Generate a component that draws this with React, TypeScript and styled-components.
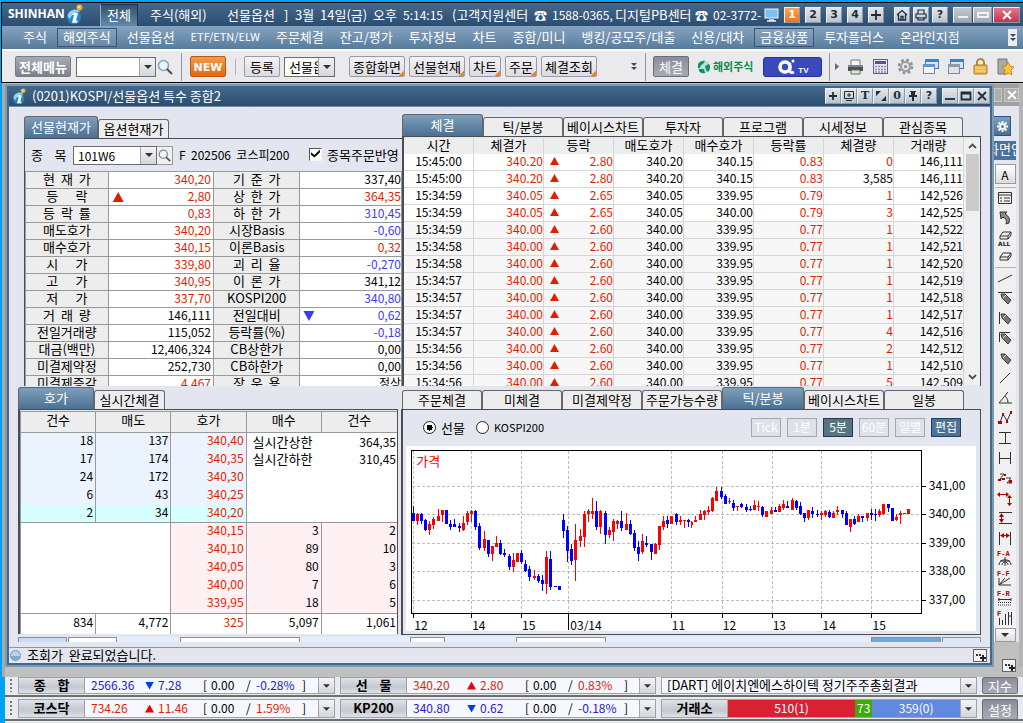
import React from 'react';
import styled, { createGlobalStyle, css } from 'styled-components';

const RED = '#e01e00';
const BLUE = '#3a3aff';
const INK = '#000';

const GlobalStyle = createGlobalStyle`
  *, *::before, *::after { box-sizing: border-box; }
  body {
    margin: 0;
    background: #00a2f5;
    color: ${INK};
    font: 13px/15px "Noto Sans CJK KR", "DejaVu Sans", sans-serif;
  }
  button, input, select {
    font: inherit;
    color: inherit;
    margin: 0;
    padding: 0;
    border: 0;
    border-radius: 0;
    background: none;
  }
  svg { display: block; flex: none; }
`;

/* ---------- page shell ---------- */

const Page = styled.div`
  min-height: 100vh;
  display: flex;
  flex-direction: column;
  padding-top: 2px;
  overflow: hidden;
  white-space: pre;
`;

const Header = styled.header`
  margin-left: 1px;
  border: 1px solid #000;
  border-right: 0;
`;

const TitleBar = styled.div`
  display: flex;
  align-items: center;
  height: 23px;
  padding: 0 3px 0 6px;
  color: #fff;
  background: linear-gradient(#46698b, #2b4e70);
`;

const Brand = styled.h1`
  display: flex;
  align-items: center;
  gap: 2px;
  width: 92px;
  margin: 0;
  font: 700 12px/20px "Open Sans", "Noto Sans", sans-serif;
`;

const AllTab = styled.button`
  align-self: flex-end;
  width: 38px;
  height: 22px;
  padding-bottom: 2px;
  color: #fff;
  border: 1px solid #1d344c;
  border-bottom: 0;
  border-left-color: #8fb0cd;
  background: linear-gradient(#31536f, #6488aa);
`;

const TitleText = styled.div`
  flex: 1;
  display: flex;
  min-width: 0;
  margin-left: 12px;
  line-height: 20px;
  overflow: hidden;
`;

const TitlePart = styled.span<{ $w: number; $small?: boolean }>`
  flex: none;
  width: ${p => p.$w}px;
  font-size: ${p => (p.$small ? 12 : 13)}px;
`;

const TitleTools = styled.div`
  display: flex;
  align-items: center;
  gap: 5px;
`;

const ToolSet = styled.div<{ $gap?: number; $left?: number }>`
  display: flex;
  align-items: center;
  gap: ${p => p.$gap ?? 5}px;
  margin-left: ${p => p.$left ?? 0}px;
`;

const SquareButton = styled.button<{ $tone?: 'hot' | 'close' | 'wide'; $serif?: boolean }>`
  display: flex;
  align-items: center;
  justify-content: center;
  width: 16px;
  height: 16px;
  color: #222c38;
  font: 700 11px/14px "DejaVu Sans", sans-serif;
  ${p => p.$serif && 'font-family: "DejaVu Serif", serif;'}
  border: 1px solid #eef1f5;
  border-right-color: #8b97a6;
  border-bottom-color: #8b97a6;
  background: linear-gradient(#e2e7ed, #b9c3cf);
  ${p => p.$tone === 'hot' && css`
    color: #fff;
    background: linear-gradient(#f9a558, #ee7413);
  `}
  ${p => p.$tone === 'wide' && css`
    width: 19px;
    color: #f4f4f4;
    background: linear-gradient(#c3c9cf, #9fa8b1);
  `}
  ${p => p.$tone === 'close' && css`
    width: 27px;
    color: #fff;
    background: linear-gradient(#df7a8c, #c33350);
  `}
`;

const MenuBar = styled.nav`
  display: flex;
  align-items: center;
  gap: 4px;
  height: 23px;
  padding: 0 6px 0 15px;
  background: linear-gradient(#86a4c1, #587b9b);
`;

const MenuLink = styled.a<{ $boxed?: boolean; $latin?: boolean }>`
  height: 19px;
  padding: 0 5px;
  color: #fff;
  font-size: ${p => (p.$latin ? 11 : 13)}px;
  text-decoration: none;
  border: 1px solid ${p => (p.$boxed ? '#35557a' : 'transparent')};
  background: ${p => (p.$boxed ? 'rgba(255,255,255,0.06)' : 'none')};
`;

const MenuMore = styled.button`
  display: flex;
  align-items: center;
  justify-content: center;
  width: 9px;
  height: 17px;
  margin-left: auto;
  background: #e9edf2;
`;

const Toolbar = styled.div`
  display: flex;
  align-items: center;
  height: 33px;
  padding: 0 6px 0 13px;
  border-top: 2px solid #fafafa;
  background: #eaeaec;
`;

const ToolButton = styled.button<{ $w: number; $tone?: 'dark' | 'orange' | 'menu'; $left?: number; $corner?: boolean; $short?: boolean }>`
  width: ${p => p.$w}px;
  height: ${p => (p.$short ? 17 : 21)}px;
  margin-left: ${p => p.$left ?? 0}px;
  padding-bottom: 1px;
  line-height: ${p => (p.$short ? 13 : 17)}px;
  border: 1px solid #9a9aa6;
  border-radius: 2px;
  background: linear-gradient(#f3f3f5, #dcdce1);
  ${p => p.$corner && css`
    background: linear-gradient(135deg, transparent 0 calc(100% - 4px), #e88a1c calc(100% - 4px)) right bottom / 6px 6px no-repeat,
      linear-gradient(#f3f3f5, #dcdce1);
  `}
  ${p => p.$tone === 'dark' && css`
    color: #fff;
    border-color: #6e6e7a;
    background: linear-gradient(#8a8d99, #a9abb4);
  `}
  ${p => p.$tone === 'menu' && css`
    color: #fff;
    font-weight: 700;
    border-color: #7a7c88;
    background: linear-gradient(#a9abb4, #7e818d);
  `}
  ${p => p.$tone === 'orange' && css`
    padding: 1px 0 0;
    color: #fff;
    font: 700 11px/17px "DejaVu Sans", sans-serif;
    border-color: #b85a10;
    background: linear-gradient(#f39a4c, #e9660c);
  `}
`;

const Divider = styled.span<{ $left: number; $right: number; $short?: boolean }>`
  width: 1px;
  height: ${p => (p.$short ? 16 : 28)}px;
  margin: 0 ${p => p.$right}px 0 ${p => p.$left}px;
  background: ${p => (p.$short ? '#b4b4ba' : '#8b97a3')};
`;

const Combo = styled.div<{ $w: number; $left?: number; $h?: number }>`
  display: flex;
  width: ${p => p.$w}px;
  height: ${p => p.$h ?? 20}px;
  margin-left: ${p => p.$left ?? 0}px;
  border: 1px solid #6b6b70;
  background: #fff;

  input, select {
    flex: 1;
    min-width: 0;
    padding-left: 4px;
    appearance: none;
    outline: 0;
    overflow: hidden;
  }
  input { font-size: 12px; }
`;

const DropButton = styled.button<{ $w?: number }>`
  display: flex;
  flex: none;
  align-items: center;
  justify-content: center;
  width: ${p => p.$w ?? 16}px;
  border-left: 1px solid #a5a5aa;
  background: linear-gradient(#f4f4f6, #d3d6db);
`;

const SymbolSearch = styled.button`
  display: flex;
  align-items: center;
  justify-content: center;
  width: 16px;
  height: 19px;
  border: 1px solid #9a9a9a;
  border-left: 0;
  background: #f0f0f0;
`;

const IconButton = styled.button`
  display: flex;
  align-items: center;
  justify-content: center;
  width: 18px;
  height: 20px;
`;

const OverseasLink = styled.a`
  display: flex;
  align-items: center;
  gap: 2px;
  margin-left: 8px;
  color: #0f8a4c;
  font: 700 11px/15px "Noto Sans CJK KR", sans-serif;
  text-decoration: none;
`;

const TvButton = styled.button`
  display: flex;
  align-items: center;
  justify-content: center;
  gap: 1px;
  width: 59px;
  height: 20px;
  margin-left: 10px;
  color: #fff;
  font: 700 8px/8px "Liberation Sans", sans-serif;
  border: 1px solid #26309a;
  border-radius: 3px;
  background: #3a49bb;

  span { padding-top: 8px; }
`;

/* ---------- workspace ---------- */

const Workspace = styled.div`
  display: flex;
  flex: 1;
  align-items: stretch;
  margin-left: 2px;
  padding: 1px 0 10px;
  border-left: 3px solid #a9a9ad;
  background: #bfbfbf;
`;

const Window = styled.main`
  display: flex;
  flex-direction: column;
  flex: 1;
  min-width: 0;
  border: 2px solid #7e9ab2;
`;

const WindowInner = styled.div`
  display: flex;
  flex-direction: column;
  flex: 1;
  border: 2px solid #43698a;
  border-top: 0;
  background: #e3e6ee;
`;

const WindowTitle = styled.div`
  display: flex;
  align-items: center;
  height: 21px;
  padding: 0 0 0 4px;
  color: #fff;
  border-bottom: 1px solid #6d8dab;
  background: linear-gradient(#46698b, #2b4e70);

  h2 {
    flex: 1;
    margin: 0 0 0 6px;
    padding-bottom: 2px;
    font: inherit;
  }
`;

const TopRow = styled.div`
  display: flex;
  height: 279px;
  overflow: hidden;
`;

const QuotePane = styled.section`
  flex: none;
  width: 393px;
  padding: 9px 0 0 15px;
`;

const TradesPane = styled.section`
  flex: 1;
  min-width: 0;
  padding: 7px 9px 0 0;
`;

const Tabs = styled.div<{ $inset?: boolean }>`
  display: flex;
  align-items: flex-end;
  height: 22px;
  padding-left: ${p => (p.$inset ? 1 : 0)}px;
`;

const Tab = styled.button<{ $w: number; $on?: boolean }>`
  width: ${p => p.$w}px;
  height: ${p => (p.$on ? 22 : 19)}px;
  padding-bottom: 2px;
  line-height: 15px;
  white-space: nowrap;
  border: 1px solid #66666e;
  border-bottom: 0;
  border-radius: 3px 3px 0 0;
  color: ${p => (p.$on ? '#fff' : INK)};
  background: ${p => (p.$on ? 'linear-gradient(#7f9fba, #4a7092)' : '#ededee')};

  & + & { border-left-width: ${p => (p.$on ? 1 : 0)}px; }
`;

const Frame = styled.div`
  border: 1px solid #4c4c54;
  border-left-width: 2px;
`;

const FrameLeft = styled(Frame)`
  border-width: 1px 0 0 1px;
`;

const SymbolRow = styled.form`
  display: flex;
  align-items: center;
  height: 32px;
  padding-left: 6px;
`;

const SymbolLabel = styled.label`
  width: 42px;
  padding-bottom: 2px;
`;

const SymbolName = styled.span`
  width: 130px;
  margin-left: 6px;
  padding-bottom: 2px;
  font-size: 12px;
`;

const CheckLabel = styled.label`
  display: flex;
  align-items: center;
  gap: 5px;
  padding-bottom: 2px;
`;

const CheckBox = styled.input`
  display: flex;
  appearance: none;
  width: 13px;
  height: 13px;
  border: 1px solid #f4f4f4;
  border-top-color: #555;
  border-left-color: #555;
  background: #fff;

  &:checked::after {
    content: "";
    width: 9px;
    height: 8px;
    margin: 1px;
    background: #000;
    clip-path: polygon(0 35%, 38% 70%, 100% 0, 100% 35%, 38% 100%, 0 65%);
  }
`;

const QuoteTable = styled.table`
  width: 100%;
  table-layout: fixed;
  border-spacing: 0;
  border-top: 1px solid #999;
  border-left: 1px solid #999;
  line-height: 13px;

  th, td {
    height: 17px;
    padding: 0;
    vertical-align: top;
    border-right: 1px solid #999;
    border-bottom: 1px solid #999;
  }
  th { font-weight: 400; background: #ededed; }
  td { background: #fff; }
`;

const tones = { r: RED, b: BLUE, k: INK };
type Tone = keyof typeof tones;

const Num = styled.td<{ $tone?: Tone; $edge?: number }>`
  color: ${p => tones[p.$tone ?? 'k']};
  font-size: 12px;
  text-align: right;

  && { padding-right: ${p => p.$edge ?? 2}px; }
`;

const MarkedCell = styled.div<{ $left: number }>`
  display: flex;
  align-items: flex-start;
  justify-content: space-between;
  padding-left: ${p => p.$left}px;

  i { margin-top: 3px; }
`;

const Triangle = styled.i<{ $down?: boolean; $size?: number; $color?: string }>`
  display: inline-block;
  flex: none;
  width: ${p => p.$size ?? 9}px;
  height: ${p => (p.$size ?? 9) - 1}px;
  background: ${p => p.$color ?? (p.$down ? BLUE : RED)};
  clip-path: ${p => (p.$down ? 'polygon(0 0, 100% 0, 50% 100%)' : 'polygon(50% 0, 100% 100%, 0 100%)')};
`;

const TradesFrame = styled(Frame)`
  display: flex;
  padding-top: 1px;
`;

const TradeArea = styled.div`
  flex: 1;
  min-width: 0;
`;

const TradeTable = styled.table`
  width: 100%;
  table-layout: fixed;
  border-spacing: 0;
  line-height: 13px;

  th, td {
    height: 17px;
    padding: 0;
    vertical-align: top;
    border-right: 1px solid #d6d6d6;
    border-bottom: 1px solid #d6d6d6;
  }
  th {
    height: 16px;
    font-weight: 400;
    border-bottom: 0;
    background: #ededed;
  }
  tbody tr { background: #f7f7f7; }
  tbody tr:nth-child(-n + 4) { background: #fff; }
  td:first-child { font-size: 12px; text-align: center; }
`;

const ScrollBar = styled.div`
  display: flex;
  flex-direction: column;
  align-items: center;
  width: 16px;
  height: 247px;
  padding: 4px 1px;
  background: #f0f0f0;
`;

const ScrollThumb = styled.div`
  width: 13px;
  height: 57px;
  margin: 4px 0 auto;
  background: #cbcbcb;
`;

const BottomRow = styled.div`
  display: flex;
  align-items: flex-start;
  padding-top: 1px;
`;

const BookPane = styled.section`
  flex: none;
  width: 392px;
  padding: 0 3px 0 9px;
`;

const ChartPane = styled.section`
  flex: 1;
  min-width: 0;
  padding-right: 9px;
`;

const BookFrame = styled(Frame)`
  padding-top: 1px;
  border-bottom: 0;
`;

const BookTable = styled.table`
  width: 100%;
  table-layout: fixed;
  border-spacing: 0;
  border-top: 1px solid #999;
  border-left: 1px solid #999;
  background: #fff;
  line-height: 13px;

  th, td {
    height: 18px;
    padding: 0;
    vertical-align: top;
    border-right: 1px solid #999;
  }
  th {
    height: 21px;
    padding-top: 1px;
    font-weight: 400;
    border-bottom: 1px solid #999;
    background: #ededed;
  }
  tfoot td { height: 21px; padding-top: 1px; border-top: 1px solid #999; }
  tr > :last-child { border-right: 0; }
`;

const AskRow = styled.tr<{ $best?: boolean }>`
  background: ${p => (p.$best ? '#d8ffff' : '#ebf3ff')};
  td { border-bottom: ${p => (p.$best ? '1px solid #999' : '0')}; }
  && > td:nth-child(3) { border-right: 1px solid #999; }
`;

const BidRow = styled.tr`
  background: #fff0f3;
`;

const LimitCell = styled.td`
  vertical-align: top;
  background: #fff;

  && { border-bottom: 1px solid #999; border-right: 0; }

  dl {
    display: grid;
    grid-template-columns: auto auto;
    justify-content: space-between;
    row-gap: 4px;
    margin: 2px 1px 0 6px;
  }
  dd { margin: 0; font-size: 12px; text-align: right; }
`;

const BlankCell = styled.td`
  background: #fff;
`;

const ChartBox = styled(Frame)`
  display: flex;
  flex-direction: column;
  padding: 0 4px 3px 3px;
`;

const ChartBar = styled.div`
  display: flex;
  align-items: center;
  gap: 11px;
  height: 36px;
  padding: 0 15px 2px 17px;
`;

const RadioLabel = styled.label<{ $latin?: boolean }>`
  display: flex;
  align-items: center;
  gap: 5px;
  font-size: ${p => (p.$latin ? 11 : 13)}px;
`;

const Radio = styled.input`
  appearance: none;
  width: 13px;
  height: 13px;
  border: 1px solid #222;
  border-radius: 50%;
  background: #fff;

  &:checked { background: radial-gradient(circle, #000 0 3px, #fff 3px); }
`;

const PeriodSet = styled.div`
  display: flex;
  gap: 6px;
  margin-left: auto;
`;

const PeriodButton = styled.button<{ $state: 'off' | 'on' | 'edit' }>`
  width: 30px;
  height: 19px;
  padding-bottom: 2px;
  font-size: 12px;
  line-height: 15px;
  color: #fff;
  border: 1px solid ${p => ({ off: '#a6a6ae', on: '#26384a', edit: '#1f4166' }[p.$state])};
  background: ${p => ({ off: '#dfe1e8', on: '#577482', edit: '#4b7398' }[p.$state])};
`;

const ChartSvg = styled.svg`
  width: 100%;
  height: 185px;
  background: #fff;
`;

const PeekStrip = styled.div`
  display: flex;
  height: 5px;
  margin: 2px 9px 5px 9px;
  overflow: hidden;
  background: #e5eeff;
`;

const Peek = styled.span<{ $w: number; $left: number; $fill?: string; $push?: boolean }>`
  width: ${p => p.$w}px;
  height: 6px;
  margin-left: ${p => (p.$push ? 'auto' : `${p.$left}px`)};
  border: 1px solid #8a8f9a;
  background: ${p => p.$fill ?? '#fff'};
`;

const StatusBar = styled.footer`
  display: flex;
  align-items: center;
  gap: 6px;
  flex: 1;
  min-height: 16px;
  padding: 0 3px 0 1px;
  border-top: 1px solid #7e9ab2;
`;

const StatusDot = styled.i`
  width: 11px;
  height: 11px;
  border: 1px solid #6f96bd;
  border-radius: 50%;
  background: linear-gradient(#b9d3ec 50%, #7fabd4 50%);
`;

const StatusText = styled.p`
  margin: 0;
  padding-bottom: 2px;
  line-height: 13px;
`;

const StatusButton = styled.button`
  display: flex;
  align-items: center;
  justify-content: center;
  width: 14px;
  height: 13px;
  margin-left: auto;
  border: 1px solid #666;
  background: #f2f2f2;
`;

/* ---------- drawing tools at the right ---------- */

const Side = styled.aside`
  display: flex;
  flex-direction: column;
  width: 29px;
  flex: none;
  border-right: 4px solid #b4b4b4;
  background: #e3e6ee;
`;

const SideTitle = styled.div`
  display: flex;
  align-items: center;
  gap: 2px;
  height: 22px;
  overflow: hidden;
  background: #a0a0a0;
`;

const SideTitleButton = styled.button<{ $w: number }>`
  display: flex;
  align-items: center;
  justify-content: center;
  width: ${p => p.$w}px;
  height: 14px;
  color: #fff;
  border: 1px solid #c8c8c8;
  background: #aeaeae;
`;

const SideSettings = styled.button`
  display: flex;
  align-items: center;
  justify-content: center;
  width: 17px;
  height: 20px;
  margin: 10px 0 5px;
  border: 1px solid #2f577d;
  border-left: 0;
  background: linear-gradient(#7b9fbf, #476f95);
`;

const SideName = styled.div`
  display: flex;
  justify-content: center;
  width: 22px;
  height: 19px;
  line-height: 15px;
  color: #fff;
  overflow: hidden;
  background: #4a7196;
`;

const SideTools = styled.div`
  display: flex;
  flex-direction: column;
  align-items: center;
  width: 22px;
  margin-top: 4px;
  background: #f0f0f0;
`;

const SideTool = styled.button<{ $pressed?: boolean; $rule?: boolean; $h?: number }>`
  display: flex;
  align-items: center;
  justify-content: center;
  width: 21px;
  height: ${p => p.$h ?? 20}px;
  font-size: 12px;
  line-height: 15px;
  border-bottom: ${p => (p.$rule ? '1px solid #b5b5b5' : '0')};
  ${p => p.$pressed && css`
    border: 1px solid #9a9a9a;
    background: linear-gradient(#fff, #dcdcdc);
  `}
`;

const SideFoot = styled.div`
  display: flex;
  flex: 1;
  align-items: flex-end;
  padding: 5px 3px 5px;
  margin-bottom: -10px;
  background: #bfbfbf;
`;

/* ---------- index tickers ---------- */

const Tickers = styled.footer`
  margin-left: 5px;
  padding-bottom: 2px;
  background: #e9eaee;
`;

const TickerRow = styled.div<{ $short?: boolean }>`
  display: flex;
  gap: 5px;
  height: ${p => (p.$short ? 20 : 24)}px;
  padding: ${p => (p.$short ? '0 5px 1px 4px' : '2px 5px 1px 4px')};
  border-bottom: 2px solid #6f7069;
  line-height: 13px;
`;

const Grip = styled.i`
  width: 4px;
  margin: 2px 0;
  background: repeating-linear-gradient(#77787c 0 2px, transparent 2px 4px) 1px 0 / 2px 100% no-repeat;
`;

const TickerBox = styled.section<{ $w?: number }>`
  display: flex;
  ${p => (p.$w ? `flex: none; width: ${p.$w}px;` : 'flex: 1; min-width: 0;')}
  border: 1px solid #9aa3ad;
  background: #f7f8ff;
`;

const TickerName = styled.h3`
  display: flex;
  align-items: center;
  justify-content: center;
  flex: none;
  width: 66px;
  margin: 0;
  padding-bottom: 2px;
  font: inherit;
  font-weight: 700;
  border-right: 1px solid #9aa3ad;
  background: linear-gradient(#dfe2e7, #c3c8cf 60%, #dfe2e7);
`;

const TickerValues = styled.div<{ $color: string }>`
  display: grid;
  grid-template-columns: 54px 13px 45px 8px 35px 10px 46px 1fr;
  align-items: center;
  flex: 1;
  padding: 0 0 2px 6px;
  color: ${p => p.$color};
  font-size: 12px;

  span { color: ${INK}; }
  i { margin-top: 2px; }
`;

const News = styled.a`
  flex: 1;
  min-width: 0;
  padding-left: 5px;
  color: ${INK};
  text-decoration: none;
`;

const Ratio = styled.div<{ $color: string; $grow: number }>`
  display: flex;
  align-items: center;
  justify-content: center;
  flex: ${p => p.$grow} 1 0;
  min-width: 0;
  padding-bottom: 2px;
  color: #fff;
  font-size: 12px;
  background: ${p => p.$color};
`;

/* ---------- data ---------- */

const menu = ['주식', '해외주식', '선물옵션', 'ETF/ETN/ELW', '주문체결', '잔고/평가', '투자정보', '차트', '종합/미니', '뱅킹/공모주/대출', '신용/대차', '금융상품', '투자플러스', '온라인지점'];

const titleParts: [string, number, boolean?][] = [
  ['주식(해외)', 77], ['선물옵션', 57], [']', 11], ['3월', 25], ['14일(금)', 53], ['오후', 30], ['5:14:15', 49, true],
  ['(고객지원센터', 82], ['☎', 18], ['1588-0365,', 63, true], ['디지털PB센터', 80], ['☎', 18], ['02-3772-', 48, true],
];

type Q = [string, string, Tone, string, string, Tone, ('up' | 'down')?];
const quotes: Q[] = [
  ['현\u00a0\u00a0재\u00a0\u00a0가', '340,20', 'r', '기\u00a0\u00a0준\u00a0\u00a0가', '337,40', 'k'],
  ['등\u00a0\u00a0\u00a0\u00a0\u00a0\u00a0락', '2,80', 'r', '상\u00a0\u00a0한\u00a0\u00a0가', '364,35', 'r', 'up'],
  ['등\u00a0\u00a0락\u00a0\u00a0률', '0,83', 'r', '하\u00a0\u00a0한\u00a0\u00a0가', '310,45', 'b'],
  ['매도호가', '340,20', 'r', '시장Basis', '-0,60', 'b'],
  ['매수호가', '340,15', 'r', '이론Basis', '0,32', 'r'],
  ['시\u00a0\u00a0\u00a0\u00a0\u00a0\u00a0가', '339,80', 'r', '괴\u00a0\u00a0리\u00a0\u00a0율', '-0,270', 'b'],
  ['고\u00a0\u00a0\u00a0\u00a0\u00a0\u00a0가', '340,95', 'r', '이\u00a0\u00a0론\u00a0\u00a0가', '341,12', 'k'],
  ['저\u00a0\u00a0\u00a0\u00a0\u00a0\u00a0가', '337,70', 'r', 'KOSPI200', '340,80', 'b'],
  ['거\u00a0\u00a0래\u00a0\u00a0량', '146,111', 'k', '전일대비', '0,62', 'b', 'down'],
  ['전일거래량', '115,052', 'k', '등락률(%)', '-0,18', 'b'],
  ['대금(백만)', '12,406,324', 'k', 'CB상한가', '0,00', 'k'],
  ['미결제약정', '252,730', 'k', 'CB하한가', '0,00', 'k'],
  ['미결제증감', '4,467', 'r', '장\u00a0\u00a0운\u00a0\u00a0용', '정상', 'k'],
];

const tradeHead = ['시간', '체결가', '등락', '매도호가', '매수호가', '등락률', '체결량', '거래량'];
const trades = [
  ['15:45:00', '340.20', '2.80', '340.20', '340.15', '0.83', '0', '146,111'],
  ['15:45:00', '340.20', '2.80', '340.20', '340.15', '0.83', '3,585', '146,111'],
  ['15:34:59', '340.05', '2.65', '340.05', '339.95', '0.79', '1', '142,526'],
  ['15:34:59', '340.05', '2.65', '340.05', '340.00', '0.79', '3', '142,525'],
  ['15:34:59', '340.00', '2.60', '340.00', '339.95', '0.77', '1', '142,522'],
  ['15:34:58', '340.00', '2.60', '340.00', '339.95', '0.77', '1', '142,521'],
  ['15:34:58', '340.00', '2.60', '340.00', '339.95', '0.77', '1', '142,520'],
  ['15:34:57', '340.00', '2.60', '340.00', '339.95', '0.77', '1', '142,519'],
  ['15:34:57', '340.00', '2.60', '340.00', '339.95', '0.77', '1', '142,518'],
  ['15:34:57', '340.00', '2.60', '340.00', '339.95', '0.77', '1', '142,517'],
  ['15:34:57', '340.00', '2.60', '340.00', '339.95', '0.77', '4', '142,516'],
  ['15:34:56', '340.00', '2.60', '340.00', '339.95', '0.77', '2', '142,512'],
  ['15:34:56', '340.00', '2.60', '340.00', '339.95', '0.77', '1', '142,510'],
  ['15:34:56', '340.00', '2.60', '340.00', '339.95', '0.77', '5', '142,509'],
];

const asks = [['18', '137', '340,40'], ['17', '174', '340,35'], ['24', '172', '340,30'], ['6', '43', '340,25'], ['2', '34', '340,20']];
const bids = [['340,15', '3', '2'], ['340,10', '89', '10'], ['340,05', '80', '3'], ['340,00', '7', '6'], ['339,95', '18', '5']];

/* x, high, body top, body bottom, low, rising (1) or falling (0); three units to a pixel */
const candles = [
  [37, 363, 383, 408, 408, 0], [49, 383, 387, 408, 420, 1], [61, 384, 387, 408, 417, 0], [73, 402, 405, 435, 438, 0],
  [85, 408, 417, 435, 450, 1], [97, 396, 402, 420, 432, 1], [112, 372, 393, 408, 408, 1], [124, 375, 375, 390, 411, 1],
  [136, 375, 375, 417, 417, 0], [148, 405, 417, 426, 435, 0], [160, 402, 417, 426, 426, 0], [175, 414, 423, 429, 441, 0],
  [187, 393, 414, 435, 438, 1], [199, 378, 384, 411, 420, 1], [211, 375, 378, 387, 411, 1], [223, 375, 378, 426, 435, 0],
  [235, 414, 423, 489, 495, 0], [250, 438, 462, 489, 498, 1], [262, 465, 465, 507, 516, 0], [274, 483, 483, 507, 528, 1],
  [286, 453, 474, 486, 486, 1], [298, 465, 474, 507, 510, 0], [310, 492, 504, 510, 516, 0], [325, 507, 513, 546, 555, 0],
  [337, 504, 525, 546, 561, 1], [349, 504, 504, 531, 531, 1], [361, 495, 504, 531, 537, 0], [373, 525, 537, 558, 561, 0],
  [385, 543, 552, 576, 588, 0], [400, 555, 573, 579, 585, 1], [412, 567, 573, 588, 594, 0], [424, 570, 585, 597, 618, 0],
  [436, 498, 516, 597, 627, 1], [448, 498, 522, 606, 615, 0], [463, 603, 603, 606, 606, 0], [475, 603, 603, 615, 615, 0],
  [487, 387, 405, 438, 459, 0], [499, 423, 435, 498, 531, 0], [511, 477, 492, 528, 540, 0], [523, 417, 465, 525, 588, 1],
  [538, 432, 453, 468, 486, 1], [550, 378, 387, 456, 486, 1], [562, 372, 378, 387, 411, 1], [574, 339, 378, 387, 402, 1],
  [586, 348, 378, 426, 435, 0], [598, 375, 378, 426, 447, 1], [613, 378, 384, 450, 477, 0], [625, 426, 435, 450, 459, 1],
  [637, 402, 408, 441, 468, 1], [649, 405, 408, 417, 432, 1], [661, 378, 408, 429, 438, 0], [676, 384, 417, 435, 435, 1],
  [688, 405, 417, 447, 450, 0], [700, 435, 444, 489, 498, 0], [712, 468, 486, 507, 528, 0], [724, 447, 468, 501, 507, 1],
  [736, 453, 474, 480, 486, 0], [751, 477, 477, 501, 525, 0], [763, 474, 477, 507, 507, 1], [775, 423, 423, 480, 495, 1],
  [787, 393, 408, 426, 435, 1], [799, 393, 405, 417, 429, 0], [811, 393, 393, 417, 417, 1], [826, 384, 387, 411, 420, 0],
  [838, 393, 405, 411, 420, 1], [850, 405, 405, 408, 429, 1], [862, 402, 405, 411, 426, 0], [874, 408, 411, 420, 429, 1],
  [886, 393, 405, 411, 411, 1], [901, 375, 387, 405, 405, 1], [913, 375, 378, 390, 405, 1], [925, 363, 375, 381, 390, 1],
  [937, 336, 339, 378, 381, 1], [949, 306, 318, 348, 348, 1], [964, 306, 318, 336, 342, 0], [976, 327, 333, 357, 357, 0],
  [988, 339, 348, 351, 357, 1], [1000, 345, 354, 369, 378, 0], [1012, 363, 363, 366, 378, 1], [1024, 354, 357, 366, 369, 0],
  [1039, 357, 366, 375, 381, 0], [1051, 363, 372, 375, 378, 0], [1063, 345, 360, 375, 375, 1], [1075, 348, 363, 366, 378, 1],
  [1087, 363, 366, 390, 396, 0], [1099, 378, 378, 396, 396, 1], [1114, 366, 375, 387, 387, 1], [1126, 366, 375, 381, 381, 0],
  [1138, 357, 363, 381, 381, 1], [1150, 345, 357, 369, 375, 1], [1162, 348, 363, 369, 369, 0], [1177, 339, 345, 375, 375, 1],
  [1189, 345, 348, 369, 375, 0], [1201, 351, 363, 387, 390, 0], [1213, 384, 384, 399, 411, 0], [1225, 375, 375, 399, 405, 1],
  [1237, 366, 378, 387, 399, 0], [1252, 375, 387, 390, 396, 0], [1264, 378, 384, 390, 405, 1], [1276, 375, 378, 390, 396, 1],
  [1288, 375, 381, 396, 399, 0], [1300, 378, 384, 399, 399, 1], [1312, 363, 375, 381, 390, 1], [1327, 375, 375, 387, 399, 0],
  [1339, 378, 384, 420, 420, 0], [1351, 402, 402, 426, 441, 1], [1363, 393, 402, 417, 420, 0], [1375, 387, 393, 411, 411, 1],
  [1387, 393, 393, 399, 411, 0], [1402, 384, 384, 399, 408, 1], [1414, 372, 384, 390, 405, 0], [1426, 372, 387, 390, 408, 0],
  [1438, 372, 378, 390, 396, 1], [1450, 357, 357, 387, 390, 1], [1465, 357, 357, 369, 381, 0], [1477, 369, 369, 408, 408, 0],
  [1489, 387, 396, 405, 408, 1], [1501, 378, 384, 390, 417, 1], [1513, 384, 384, 387, 387, 1], [1525, 372, 372, 387, 387, 1],
];
const hours: [number, string][] = [[37, '12'], [211, '14'], [361, '15'], [502, '03/14'], [811, '11'], [964, '12'], [1114, '13'], [1264, '14'], [1414, '15']];
const levels: [number, string][] = [[303, '341,00'], [387, '340,00'], [474, '339,00'], [558, '338,00'], [645, '337,00']];

/* ---------- drawings ---------- */

const Arrow = ({ size = 7 }: { size?: number }) => (
  <svg width={size} height={4} viewBox="0 0 8 4"><path d="M0 0h8L4 4z" fill="#333" /></svg>
);

const InfoMark = ({ size }: { size: number }) => (
  <svg width={size} height={size * 1.3} viewBox="0 0 16 21">
    <ellipse cx="7" cy="13" rx="7" ry="7.500" fill="#1f86c9" />
    <path d="M1 10c3-5 9-6 12-2-4 0-8 2-10 7-2-1-3-3-2-5z" fill="#8fd3f2" />
    <path d="M6 9h5l-2 8h2l-1 2H5l2-8H5z" fill="#fff" />
    <circle cx="12.500" cy="3.500" r="3" fill="#f2ac3c" />
    <circle cx="12" cy="3" r="1.200" fill="#ffe2a4" />
  </svg>
);

const Magnifier = ({ size = 16, color = '#7da6cd' }: { size?: number; color?: string }) => (
  <svg width={size} height={size} viewBox="0 0 16 16">
    <circle cx="6.500" cy="6.500" r="5" fill="#eef5fb" stroke={color} strokeWidth="1.600" />
    <path d="M10 10l5 5" stroke="#555" strokeWidth="2.200" />
  </svg>
);

const Monitor = () => (
  <svg width="15" height="14" viewBox="0 0 15 14">
    <rect x="1" y="1" width="13" height="9" fill="#7cc1f4" stroke="#e8f4ff" />
    <path d="M5 12h5M3 13h9" stroke="#e8eef5" strokeWidth="1.500" />
  </svg>
);

const Home = () => (
  <svg width="12" height="12" viewBox="0 0 12 12" fill="none" stroke="#222c38" strokeWidth="1.300">
    <path d="M1 6l5-4.500L11 6M2.500 5.500V11h7V5.500M5 11V7.500h2V11" />
  </svg>
);

const SmallPrinter = () => (
  <svg width="12" height="12" viewBox="0 0 12 12" fill="none" stroke="#222c38" strokeWidth="1.200">
    <path d="M3 5V1h6v4M1 5h10v4H1zM3 8v3h6V8" />
  </svg>
);

const Glyph = ({ d, fill }: { d: string; fill?: boolean }) => (
  <svg width="12" height="12" viewBox="0 0 12 12" fill={fill ? 'currentColor' : 'none'} stroke={fill ? 'none' : 'currentColor'} strokeWidth="1.800">
    <path d={d} />
  </svg>
);

const Globe = () => (
  <svg width="14" height="14" viewBox="0 0 14 14">
    <circle cx="7" cy="7" r="6.500" fill="#b9dfe4" />
    <path d="M1 4c2-3 5-3.500 7-3L6 4 4 5 3 8 1 8zM8 6l4-2c2 3 1 6-1 8L9 10zM2 9l5 0 1 4C5 14 3 12 2 11z" fill="#12925a" />
  </svg>
);

const Alpha = () => (
  <svg width="20" height="16" viewBox="0 0 20 16" fill="none" stroke="#fff">
    <circle cx="8" cy="8" r="5" strokeWidth="3.600" />
    <path d="M13 4v8c0 2 2 2 4 1" strokeWidth="2.600" />
    <circle cx="16" cy="2" r="1.500" fill="#fff" stroke="none" />
  </svg>
);

const toolbarIcons: React.ReactNode[] = [
  <g key="p">
    <path d="M4 2h9v6H4z" fill="#f5f5f5" stroke="#777" />
    <path d="M1 7h15v6H1z" fill="#4a5158" />
    <path d="M1 7h15v2H1z" fill="#7e858c" />
    <path d="M4 12h9v4H4z" fill="#d5efc9" stroke="#666" />
  </g>,
  <g key="c">
    <rect x="1.500" y="1.500" width="14" height="14" fill="#e9e6f2" stroke="#66607f" />
    <path d="M3 3h11v3H3z" fill="#5b5480" />
    <path d="M3 8.500h11M3 11.500h11M3 14h11" stroke="#8f88b0" strokeWidth="1.500" strokeDasharray="2 1" />
  </g>,
  <g key="g">
    <circle cx="8.500" cy="8.500" r="6.500" fill="none" stroke="#8f8f8f" strokeWidth="2.600" strokeDasharray="2.600 2.500" />
    <circle cx="8.500" cy="8.500" r="4.600" fill="#e5e5e5" stroke="#a0a0a0" strokeWidth="2.400" />
    <circle cx="8.500" cy="8.500" r="1.500" fill="#888" />
  </g>,
  <g key="w">
    <rect x="3.500" y="1.500" width="13" height="9" fill="#d6e6f7" stroke="#3f78b5" />
    <path d="M3 1h14v3H3z" fill="#3f83c6" />
    <rect x="1.500" y="6.500" width="11" height="9" fill="#f4f4f4" stroke="#7c8a99" />
    <path d="M1 6h12v3H1z" fill="#5b98d3" />
  </g>,
  <g key="v">
    <rect x="3.500" y="1.500" width="13" height="9" fill="#d6e6f7" stroke="#3f78b5" />
    <path d="M3 1h14v3H3z" fill="#3f83c6" />
    <rect x="1.500" y="6.500" width="11" height="9" fill="#e3e3e3" stroke="#7c8a99" />
    <path d="M1 6h12v3H1z" fill="#8e9aa6" />
  </g>,
  <g key="l">
    <path d="M5 8V4.500a3.500 3.500 0 017 0V8" fill="none" stroke="#b5872a" strokeWidth="2" />
    <rect x="2" y="7" width="13" height="9" rx="1" fill="#e9b84e" stroke="#a8781c" />
    <path d="M3 10h11M3 13h11" stroke="#f9dd95" />
  </g>,
  <g key="s">
    <path d="M1 1h9v15H1z" fill="#a9a9a9" stroke="#777" />
    <path d="M11 4l2 4 4 1-3 3 1 5-4-2-4 2 1-5-3-3 4-1z" fill="#ffc53a" stroke="#b57e12" strokeWidth="0.800" />
  </g>,
];

const pencil = (
  <g>
    <path d="M4 4h4l6 6-3 4-6-6z" fill="#777" stroke="#333" strokeWidth="0.900" />
    <path d="M6 8l3-3" stroke="#ddd" />
  </g>
);
const hot = '#b00000';
const tag = (t: string) => (
  <text x="0" y="6" fontSize="7" fontWeight="700" fontFamily="Liberation Mono, monospace" fill={hot} stroke="none">{t}</text>
);

const sideIcons: React.ReactNode[] = [
  <g key="0"><path d="M1.500 2.500h13v11h-13zM1.500 5h13" /><path d="M3 8h2M7 8h6M3 11h2M7 11h6" /></g>,
  <path key="1" d="M3 2h7L8 4c4 2 5 5 4 9l-3 1c1-3 0-6-3-7L4 9z" fill="#888" />,
  <g key="2"><path d="M3 6l3-4h8l-3 4zM3 6v3h8V6M11 9l3-4V2" /><text x="1" y="16" fontSize="6" fontWeight="700" fontFamily="DejaVu Sans, sans-serif" fill="#222" stroke="none">ALL</text></g>,
  <path key="3" d="M3 8l3-4h8l-3 4zM3 8v3h8V8M11 11l3-4V4" />,
  <path key="4" d="M1 12L15 5" />,
  <g key="5"><path d="M1 2.500h14" />{pencil}</g>,
  <g key="6"><path d="M2.500 2v12" />{pencil}</g>,
  <g key="7"><path d="M2.500 12V2.500H13" />{pencil}</g>,
  <g key="8">{pencil}</g>,
  <path key="9" d="M3 13L13 3" />,
  <path key="10" d="M11 2L2 13h13M8 6c2 2 3 4 3 7" />,
  <g key="11"><path d="M3 13l3-9 4 7 4-9" /><path d="M1 11h4v3H1zM5 3h2v3H5zM9 10h2v3H9zM13 1h2v3h-2z" fill={hot} stroke="none" /></g>,
  <path key="12" d="M2 2.500h12M8.500 3v10M2 13.500h12" />,
  <path key="13" d="M2.500 2v12M13.500 2v12M3 8.500h11" />,
  <g key="14"><path d="M3 4h4L3 9h5M9 8h5l-4 5h5" stroke="#444" /><path d="M1 9h3v2H1zM7 4h2v2H7zM12 10h3v3h-3zM5 8h3v2H5z" fill={hot} stroke="none" /></g>,
  <g key="15" stroke={hot}><path d="M1 4.500h10M12.500 6v9" /><path d="M3 2L0 4.500 3 7zM9 2l3 2.500L9 7zM10 8l2.500-3L15 8zM10 13l2.500 3 2.500-3z" fill={hot} stroke="none" /></g>,
  <g key="16"><path d="M2 2.500h13M2 13.500h13" /><path d="M4.500 4v8" stroke={hot} /><path d="M2 7l2.500-4L7 7zM2 9l2.500 4L7 9z" fill={hot} stroke="none" /></g>,
  <g key="17"><path d="M2.500 2v13M13.500 2v13" /><path d="M4 5.500h8" stroke={hot} /><path d="M7 3L3 5.500 7 8zM9 3l4 2.500L9 8z" fill={hot} stroke="none" /></g>,
  <g key="18">{tag('F-A')}<path d="M8 7v9M2 15c0-7 12-7 12 0M5 15c0-4 6-4 6 0M3 11h10" /></g>,
  <g key="19">{tag('F-F')}<path d="M2 8v7h12M2 15L13 8M2 15L8 8" /></g>,
  <g key="20">{tag('F-R')}<path d="M1 9.500h13M2 8v3M14 8v3" /><path d="M1 12.500h14M1 15h14" strokeDasharray="1 1" /></g>,
  <g key="21">{tag('F')}<path d="M2.500 8v7M5.500 10v5M8.500 4v11M11 6h3M11.500 2v13M14.500 2v13" /></g>,
];

const PlusPanel = () => (
  <svg width="12" height="11" viewBox="0 0 12 11">
    <path d="M2 4h2v2H2zM5 4h2v2H5z" fill="#333" />
    <path d="M9 5v6M6 8h6" stroke="#222" strokeWidth="2" />
  </svg>
);

const Chart = () => (
  <ChartSvg viewBox="15 183 1713 555" role="img" aria-label="틱/분봉 가격 차트">
    <g shapeRendering="crispEdges">
      <g stroke="#bdbdbd" strokeWidth="3" strokeDasharray="9 6">
        {levels.map(([y]) => <path key={y} d={`M33 ${y + 1}H1563`} />)}
        {hours.map(([x]) => <path key={x} d={`M${x + 1} 198V684`} />)}
      </g>
      <g stroke="#000" strokeWidth="3">
        {levels.map(([y]) => <path key={y} d={`M1565 ${y + 1}h12`} />)}
        {hours.map(([x, t]) => <path key={x} d={`M${x + 1} 685v${t.length > 2 ? 51 : 15}`} />)}
      </g>
      {candles.map(([x, hi, top, bottom, lo, up]) => (
        <g key={x} fill={up ? '#f00' : '#00f'}>
          <rect x={x - 1} y={hi} width="3" height={lo - hi} />
          <rect x={x - 4} y={top} width="9" height={bottom - top} />
        </g>
      ))}
      <rect x="31.500" y="196.500" width="1533" height="489" fill="none" stroke="#000" strokeWidth="3" />
    </g>
    <g fontSize="36">
      <text x="46" y="243" fill="#f00" fontSize="39">가격</text>
      {levels.map(([y, t]) => <text key={y} x="1586" y={y + 12}>{t}</text>)}
      {hours.map(([x, t]) => <text key={x} x={x + (t.length > 2 ? 7 : 3)} y="734">{t}</text>)}
    </g>
  </ChartSvg>
);

const MoreArrows = () => (
  <svg width="6" height="9" viewBox="0 0 6 9" fill="#3a4a5c"><path d="M0 1h6L3 4zM0 5h6L3 8z" /></svg>
);

type IndexProps = { name: string; value: string; diff: string; rate: string; down?: boolean; w: number };
const IndexTicker = ({ name, value, diff, rate, down, w }: IndexProps) => (
  <TickerBox $w={w}>
    <TickerName>{name}</TickerName>
    <TickerValues $color={down ? '#2222c8' : RED}>
      <div>{value}</div>
      <Triangle $down={down} $color={down ? '#0040e0' : '#f00000'} />
      <div>{diff}</div>
      <span>[</span><span>0.00</span><span>/</span>
      <div>{rate}</div>
      <span>]</span>
    </TickerValues>
    <DropButton aria-label={`${name} 선택`}><Arrow /></DropButton>
  </TickerBox>
);

export default function App() {
  return (
    <>
      <GlobalStyle />
      <Page>
        <Header>
          <TitleBar>
            <Brand>SHINHAN<InfoMark size={16} /></Brand>
            <AllTab>전체</AllTab>
            <TitleText>{titleParts.map(([t, w, small], i) => <TitlePart key={i} $w={w} $small={small}>{t}</TitlePart>)}</TitleText>
            <TitleTools>
              <Monitor />
              <ToolSet>
                <SquareButton $tone="hot">1</SquareButton>
                {['2', '3', '4'].map(n => <SquareButton key={n}>{n}</SquareButton>)}
                <SquareButton aria-label="추가"><Glyph d="M6 1v10M1 6h10" /></SquareButton>
              </ToolSet>
              <ToolSet $gap={3} $left={5}>
                <SquareButton aria-label="홈"><Home /></SquareButton>
                <SquareButton aria-label="인쇄"><SmallPrinter /></SquareButton>
                <SquareButton>?</SquareButton>
              </ToolSet>
              <ToolSet $gap={1}>
                <SquareButton $tone="wide" aria-label="최소화"><Glyph d="M1 8h10" /></SquareButton>
                <SquareButton $tone="wide" aria-label="이전 크기"><Glyph d="M1 4h10v4H1z" /></SquareButton>
                <SquareButton $tone="close" aria-label="닫기"><Glyph d="M2 2l8 8M10 2l-8 8" /></SquareButton>
              </ToolSet>
            </TitleTools>
          </TitleBar>
          <MenuBar>
            {menu.map(m => (
              <MenuLink key={m} href="#" $boxed={m === '해외주식' || m === '금융상품'} $latin={m.startsWith('ETF')}>{m}</MenuLink>
            ))}
            <MenuMore aria-label="더보기"><MoreArrows /></MenuMore>
          </MenuBar>
          <Toolbar>
            <ToolButton $w={56} $tone="menu">전체메뉴</ToolButton>
            <Combo $w={80} $left={5}>
              <input aria-label="화면번호" />
              <DropButton aria-label="화면 목록"><Arrow size={8} /></DropButton>
            </Combo>
            <IconButton aria-label="찾기"><Magnifier /></IconButton>
            <Divider $left={7} $right={8} />
            <ToolButton $w={36} $tone="orange">NEW</ToolButton>
            <Divider $short $left={9} $right={8} />
            <ToolButton $w={36}>등록</ToolButton>
            <Combo $w={51} $left={4}>
              <select aria-label="메뉴 그룹"><option>선물옵션</option></select>
              <DropButton as="span"><Arrow size={8} /></DropButton>
            </Combo>
            <ToolButton $w={56} $left={14} $corner>종합화면</ToolButton>
            <ToolButton $w={56} $left={4} $corner>선물현재</ToolButton>
            <ToolButton $w={32} $left={4} $corner>차트</ToolButton>
            <ToolButton $w={32} $left={4} $corner>주문</ToolButton>
            <ToolButton $w={56} $left={4} $corner>체결조회</ToolButton>
            <ToolSet $left={34}><MoreArrows /></ToolSet>
            <Divider $left={8} $right={7} />
            <ToolButton $w={36} $tone="dark">체결</ToolButton>
            <OverseasLink href="#"><Globe />해외주식</OverseasLink>
            <TvButton><Alpha /><span>TV</span></TvButton>
            <Divider $left={7} $right={5} />
            <svg width="4" height="7" viewBox="0 0 4 7"><path d="M0 0v7l4-3.500z" fill="#667" /></svg>
            <ToolSet $gap={7} $left={8}>
              {toolbarIcons.map((g, i) => (
                <IconButton key={i} aria-label={['인쇄', '계산기', '설정', '창 배열', '창 전환', '잠금', '즐겨찾기'][i]}>
                  <svg width="18" height="18" viewBox="0 0 18 18">{g}</svg>
                </IconButton>
              ))}
            </ToolSet>
          </Toolbar>
        </Header>

        <Workspace>
          <Window>
            <WindowInner>
              <WindowTitle>
                <InfoMark size={13} />
                <h2>(0201)KOSPI/선물옵션 특수 종합2</h2>
                <ToolSet $gap={0}>
                  <SquareButton aria-label="추가"><Glyph d="M6 2v8M2 6h8" /></SquareButton>
                  <SquareButton aria-label="화면 복사"><svg width="12" height="12" viewBox="0 0 12 12" fill="none" stroke="#222c38"><path d="M1.500 1.500h9v7h-9zM6 3v4M4 5h4M3 10.500h6" /></svg></SquareButton>
                  <SquareButton $serif>T</SquareButton>
                  <SquareButton aria-label="크기"><Glyph fill d="M1 1h5L1 6zM11 11H6l5-5z" /></SquareButton>
                  <SquareButton $serif>0</SquareButton>
                  <SquareButton aria-label="고정"><Glyph fill d="M3 1h6v1H8v3h2v2H7v4H5V7H2V5h2V2H3z" /></SquareButton>
                  <SquareButton>?</SquareButton>
                </ToolSet>
                <ToolSet $gap={0} $left={5}>
                  <SquareButton aria-label="최소화"><Glyph d="M1 9h10" /></SquareButton>
                  <SquareButton aria-label="최대화"><Glyph d="M1.500 2.500h9v7h-9zM1 3.500h10" /></SquareButton>
                  <SquareButton aria-label="닫기"><Glyph d="M2 2l8 8M10 2l-8 8" /></SquareButton>
                </ToolSet>
              </WindowTitle>

              <TopRow>
                <QuotePane>
                  <Tabs>
                    <Tab $w={74} $on>선물현재가</Tab>
                    <Tab $w={71}>옵션현재가</Tab>
                  </Tabs>
                  <FrameLeft>
                    <SymbolRow>
                      <SymbolLabel htmlFor="symbol">{'종\u00a0\u00a0\u00a0\u00a0목'}</SymbolLabel>
                      <Combo $w={84} $h={19}>
                        <input id="symbol" defaultValue="101W6" />
                        <DropButton type="button" aria-label="종목 목록"><Arrow size={8} /></DropButton>
                      </Combo>
                      <SymbolSearch type="button" aria-label="종목 찾기"><Magnifier size={13} color="#8a8a8a" /></SymbolSearch>
                      <SymbolName>F  202506  코스피200</SymbolName>
                      <CheckLabel><CheckBox type="checkbox" defaultChecked />종목주문반영</CheckLabel>
                    </SymbolRow>
                    <QuoteTable>
                      <colgroup>
                        <col style={{ width: '22%' }} /><col style={{ width: '28%' }} /><col style={{ width: '23%' }} /><col />
                      </colgroup>
                      <tbody>
                        {quotes.map(([a, av, at, b, bv, bt, mark]) => (
                          <tr key={a}>
                            <th scope="row">{a}</th>
                            <Num $tone={at}>{mark === 'up' ? <MarkedCell $left={4}><Triangle $size={11} />{av}</MarkedCell> : av}</Num>
                            <th scope="row">{b}</th>
                            <Num $tone={bt} $edge={0}>{mark === 'down' ? <MarkedCell $left={3}><Triangle $down $size={11} />{bv}</MarkedCell> : bv}</Num>
                          </tr>
                        ))}
                      </tbody>
                    </QuoteTable>
                  </FrameLeft>
                </QuotePane>

                <TradesPane>
                  <Tabs>
                    <Tab $w={81} $on>체결</Tab>
                    {['틱/분봉', '베이시스차트', '투자자', '프로그램', '시세정보', '관심종목'].map(t => <Tab key={t} $w={80}>{t}</Tab>)}
                  </Tabs>
                  <TradesFrame>
                    <TradeArea>
                      <TradeTable>
                        <thead><tr>{tradeHead.map(h => <th key={h} scope="col">{h}</th>)}</tr></thead>
                        <tbody>
                          {trades.map(([time, price, diff, ask, bid, rate, vol, total], i) => (
                            <tr key={i}>
                              <td>{time}</td>
                              <Num $tone="r" $edge={0}>{price}</Num>
                              <Num $tone="r" $edge={0}><MarkedCell $left={6}><Triangle />{diff}</MarkedCell></Num>
                              <Num $edge={0}>{ask}</Num>
                              <Num $edge={0}>{bid}</Num>
                              <Num $tone="r" $edge={0}>{rate}</Num>
                              <Num $tone={i === 1 ? 'k' : 'r'} $edge={0}>{vol}</Num>
                              <Num $edge={0}>{total}</Num>
                            </tr>
                          ))}
                        </tbody>
                      </TradeTable>
                    </TradeArea>
                    <ScrollBar>
                      <svg width="9" height="8" viewBox="0 0 9 8"><path d="M1 6l3.500-3.500L8 6" fill="none" stroke="#505050" strokeWidth="1.800" /></svg>
                      <ScrollThumb />
                      <svg width="9" height="8" viewBox="0 0 9 8"><path d="M1 2l3.500 3.500L8 2" fill="none" stroke="#505050" strokeWidth="1.800" /></svg>
                    </ScrollBar>
                  </TradesFrame>
                </TradesPane>
              </TopRow>

              <BottomRow>
                <BookPane>
                  <Tabs>
                    <Tab $w={76} $on>호가</Tab>
                    <Tab $w={71}>실시간체결</Tab>
                  </Tabs>
                  <BookFrame>
                    <BookTable>
                      <thead><tr>{['건수', '매도', '호가', '매수', '건수'].map((h, i) => <th key={i} scope="col">{h}</th>)}</tr></thead>
                      <tbody>
                        {asks.map(([n, q, p], i) => (
                          <AskRow key={p} $best={i === 4}>
                            <Num>{n}</Num><Num>{q}</Num><Num $tone="r">{p}</Num>
                            {i === 0 && (
                              <LimitCell colSpan={2} rowSpan={5}>
                                <dl><dt>실시간상한</dt><dd>364,35</dd><dt>실시간하한</dt><dd>310,45</dd></dl>
                              </LimitCell>
                            )}
                          </AskRow>
                        ))}
                        {bids.map(([p, q, n], i) => (
                          <BidRow key={p}>
                            {i === 0 && <BlankCell colSpan={2} rowSpan={5} />}
                            <Num $tone="r">{p}</Num><Num>{q}</Num><Num $edge={1}>{n}</Num>
                          </BidRow>
                        ))}
                      </tbody>
                      <tfoot>
                        <tr><Num>834</Num><Num>4,772</Num><Num $tone="r">325</Num><Num>5,097</Num><Num $edge={1}>1,061</Num></tr>
                      </tfoot>
                    </BookTable>
                  </BookFrame>
                </BookPane>

                <ChartPane>
                  <Tabs $inset>
                    {['주문체결', '미체결', '미결제약정', '주문가능수량'].map(t => <Tab key={t} $w={80}>{t}</Tab>)}
                    <Tab $w={82} $on>틱/분봉</Tab>
                    <Tab $w={80}>베이시스차트</Tab>
                    <Tab $w={80}>일봉</Tab>
                  </Tabs>
                  <ChartBox>
                    <ChartBar>
                      <RadioLabel><Radio type="radio" name="series" defaultChecked />선물</RadioLabel>
                      <RadioLabel $latin><Radio type="radio" name="series" />KOSPI200</RadioLabel>
                      <PeriodSet>
                        {['Tick', '1분', '5분', '60분', '일별', '편집'].map(t => (
                          <PeriodButton key={t} $state={t === '5분' ? 'on' : t === '편집' ? 'edit' : 'off'}>{t}</PeriodButton>
                        ))}
                      </PeriodSet>
                    </ChartBar>
                    <Chart />
                  </ChartBox>
                </ChartPane>
              </BottomRow>

              <PeekStrip>
                <Peek $w={49} $left={0} $fill="#c8dcf8" />
                <Peek $w={49} $left={1} />
                <Peek $w={120} $left={63} />
                <Peek $w={35} $left={110} />
                <Peek $w={90} $left={71} />
                <Peek $w={70} $left={0} $push $fill="#6da9dc" />
                <Peek $w={39} $left={1} $fill="#dbe8fa" />
              </PeekStrip>
              <StatusBar>
                <StatusDot />
                <StatusText>조회가  완료되었습니다.</StatusText>
                <StatusButton aria-label="화면 추가"><PlusPanel /></StatusButton>
              </StatusBar>
            </WindowInner>
          </Window>

          <Side>
            <SideTitle>
              <SideTitleButton $w={8} aria-label="최대화" />
              <SideTitleButton $w={15} aria-label="닫기"><Glyph d="M2 2l8 8M10 2l-8 8" /></SideTitleButton>
            </SideTitle>
            <SideSettings aria-label="차트 설정">
              <svg width="11" height="11" viewBox="0 0 11 11" stroke="#fff" strokeWidth="2"><path d="M5.500 0v11M0 5.500h11M1.500 1.500l8 8M9.500 1.500l-8 8" /><circle cx="5.500" cy="5.500" r="1.500" fill="#4f789e" stroke="none" /></svg>
            </SideSettings>
            <SideName>화면인</SideName>
            <SideTools>
              <SideTool $pressed>A</SideTool>
              <SideTool as="span" $h={4} $rule />
              {sideIcons.map((g, i) => (
                <SideTool key={i} $rule={i === 3} aria-label={`그리기 도구 ${i + 1}`}>
                  <svg width="16" height="17" viewBox="0 0 16 17" fill="none" stroke="#333">{g}</svg>
                </SideTool>
              ))}
              <SideTool $pressed $h={14} aria-label="아래로"><Arrow size={8} /></SideTool>
            </SideTools>
            <SideFoot><StatusButton aria-label="화면 추가"><PlusPanel /></StatusButton></SideFoot>
          </Side>
        </Workspace>

        <Tickers>
          <TickerRow $short>
            <Grip />
            <IndexTicker w={317} name={'종\u00a0\u00a0\u00a0\u00a0합'} value="2566.36" diff="7.28" rate="-0.28%" down />
            <IndexTicker w={316} name={'선\u00a0\u00a0\u00a0\u00a0물'} value="340.20" diff="2.80" rate="0.83%" />
            <TickerBox>
              <News href="#">[DART] 에이치엔에스하이텍 정기주주총회결과</News>
              <DropButton aria-label="뉴스 목록"><Arrow /></DropButton>
            </TickerBox>
            <ToolButton $w={36} $tone="dark" $short>지수</ToolButton>
          </TickerRow>
          <TickerRow>
            <Grip />
            <IndexTicker w={317} name="코스닥" value="734.26" diff="11.46" rate="1.59%" />
            <IndexTicker w={316} name="KP200" value="340.80" diff="0.62" rate="-0.18%" down />
            <TickerBox>
              <TickerName>거래소</TickerName>
              <Ratio $color="#db2033" $grow={126}>510(1)</Ratio>
              <Ratio $color="#40a808" $grow={17}>73</Ratio>
              <Ratio $color="#6288e0" $grow={87}>359(0)</Ratio>
              <DropButton aria-label="시장 선택"><Arrow /></DropButton>
            </TickerBox>
            <ToolButton $w={36} $tone="dark">설정</ToolButton>
          </TickerRow>
        </Tickers>
      </Page>
    </>
  );
}
